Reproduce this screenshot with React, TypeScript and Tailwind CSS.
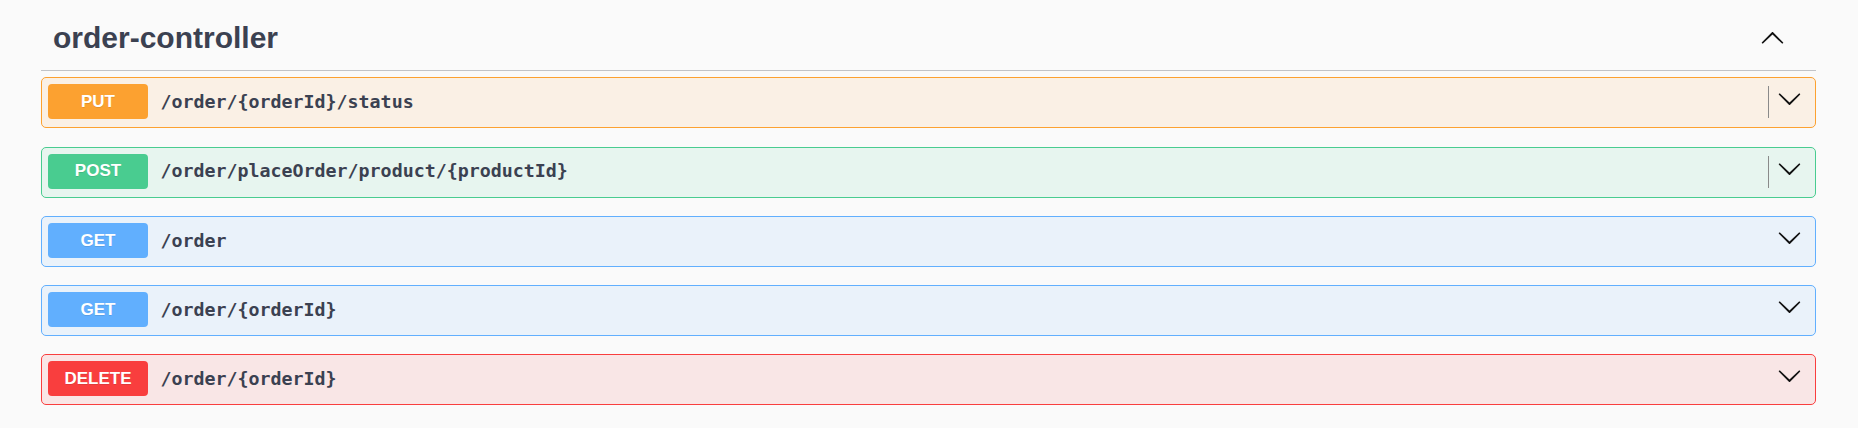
const ops = [
  { method: 'PUT', path: '/order/{orderId}/status', divider: true, badge: 'bg-[#fca130]', box: 'border-[#fca130] bg-[#fca130]/10' },
  { method: 'POST', path: '/order/placeOrder/product/{productId}', divider: true, badge: 'bg-[#49cc90]', box: 'border-[#49cc90] bg-[#49cc90]/10' },
  { method: 'GET', path: '/order', divider: false, badge: 'bg-[#61affe]', box: 'border-[#61affe] bg-[#61affe]/10' },
  { method: 'GET', path: '/order/{orderId}', divider: false, badge: 'bg-[#61affe]', box: 'border-[#61affe] bg-[#61affe]/10' },
  { method: 'DELETE', path: '/order/{orderId}', divider: false, badge: 'bg-[#f93e3e]', box: 'border-[#f93e3e] bg-[#f93e3e]/10' },
]

function Arrow({ up = false }: { up?: boolean }) {
  return (
    <svg width="25" height="25" viewBox="0 0 20 20" className={up ? 'rotate-180 shrink-0' : 'shrink-0'}>
      <path
        fill="#111"
        d="M17.418 6.109c.272-.268.709-.268.979 0s.271.701 0 .969l-7.908 7.83c-.27.268-.707.268-.979 0l-7.908-7.83c-.27-.268-.27-.701 0-.969.271-.268.709-.268.979 0L10 13.25l7.418-7.141z"
      />
    </svg>
  )
}

export default function App() {
  return (
    <div className="w-[1858px] h-[428px] bg-[#fafafa] pl-[41px] pr-[42px] overflow-hidden">
      {/* Tag header */}
      <div className="flex items-start h-[71px] border-b border-[#c1c3c7] mb-[6.25px]">
        <h3 className="flex-1 mt-[20px] pl-[12px] h-[35px] leading-[35px] text-[30px] font-bold text-[#3b4151] font-['Liberation_Sans',Arial,sans-serif]">
          order-controller
        </h3>
        <div className="mt-[25.6px] mr-[31px]">
          <Arrow up />
        </div>
      </div>

      {/* Operations */}
      <div className="flex flex-col gap-[18.3px]">
        {ops.map((op, i) => (
          <div key={i} className={`flex items-start h-[51px] border rounded-[5px] pl-[6px] ${op.box}`}>
            <div
              className={`mt-[6px] w-[100px] h-[35px] rounded-[4px] flex items-center justify-center text-white text-[17px] font-bold font-['Liberation_Sans',Arial,sans-serif] [text-shadow:0_1px_0_rgba(0,0,0,0.1)] ${op.badge}`}
            >
              {op.method}
            </div>
            <div className="flex-1 h-[35px] mt-[6px] ml-[12.5px] flex items-center text-[18.3px] font-bold text-[#3b4151] font-['DejaVu_Sans_Mono',monospace]">
              {op.path}
            </div>
            {op.divider && <div className="w-px h-[32px] mt-[8px] mr-[8px] bg-[#8a8a8a]" />}
            <div className="mt-[8px] mr-[13px]">
              <Arrow />
            </div>
          </div>
        ))}
      </div>
    </div>
  )
}
